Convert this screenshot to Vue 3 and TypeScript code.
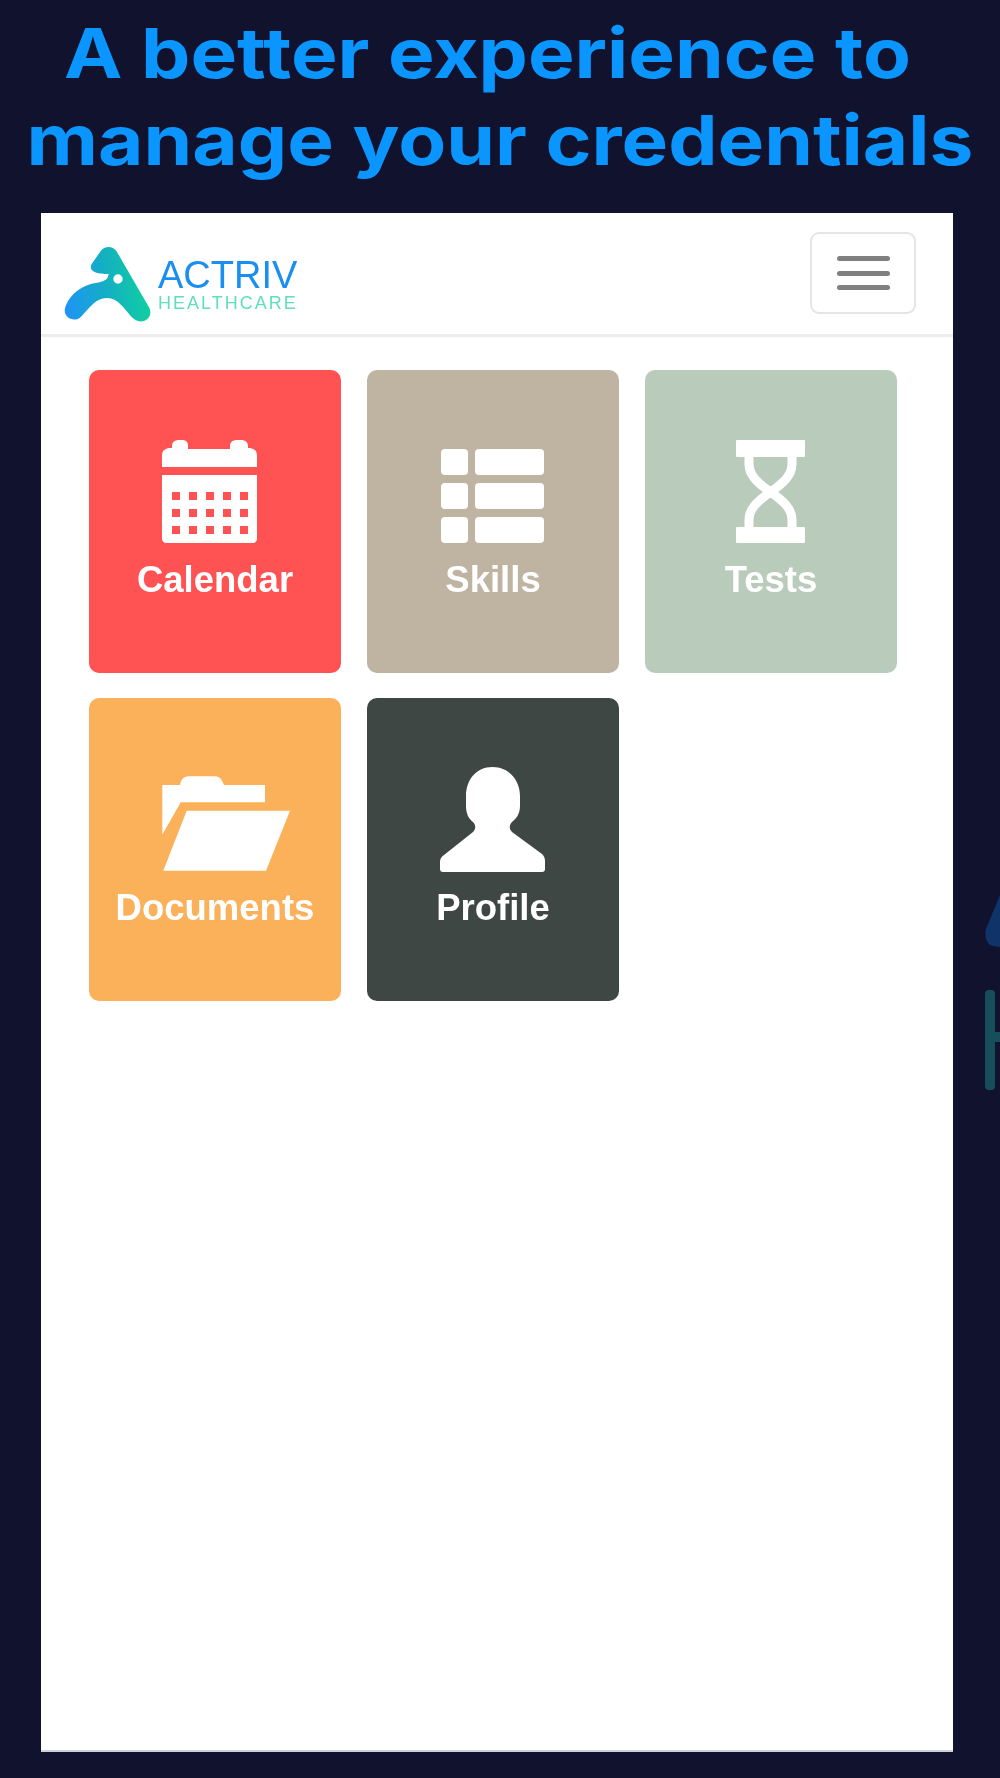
<script setup lang="ts">
interface Tile {
  label: string;
  icon: 'calendar' | 'skills' | 'tests' | 'documents' | 'profile';
  color: string;
}

const tiles: Tile[] = [
  { label: 'Calendar', icon: 'calendar', color: 'red' },
  { label: 'Skills', icon: 'skills', color: 'sand' },
  { label: 'Tests', icon: 'tests', color: 'sage' },
  { label: 'Documents', icon: 'documents', color: 'orange' },
  { label: 'Profile', icon: 'profile', color: 'slate' },
];

const calendarCols = [37, 54, 71, 88, 105];
const calendarRows = [54, 71, 88];
const skillRows = [11, 45, 79];
</script>

<template>
  <div class="page">
    <!-- faded logo peeking in from the right edge -->
    <svg class="ghost" viewBox="0 0 15 200" aria-hidden="true">
      <path d="M15 0 L1 34 C-1 42 2 50 8 51 L15 52 Z" fill="#10336a" />
      <rect x="0" y="95" width="10" height="100" rx="4" fill="#164e5c" />
      <rect x="8" y="137" width="7" height="10" fill="#164e5c" />
    </svg>

    <h1 class="headline">
      <span class="line-one">A better experience to</span>
      <span>manage your credentials</span>
    </h1>

    <section class="screen">
      <header class="nav">
        <div class="brand">
          <svg class="brand-mark" viewBox="70 105 270 240" aria-hidden="true">
            <defs>
              <linearGradient id="markGradient" gradientUnits="userSpaceOnUse" x1="80" y1="320" x2="330" y2="290">
                <stop offset="0" stop-color="#1e94f5" />
                <stop offset="0.5" stop-color="#14aec4" />
                <stop offset="1" stop-color="#10cfa0" />
              </linearGradient>
            </defs>
            <path
              fill="url(#markGradient)"
              fill-rule="evenodd"
              d="M156 162 L184 122 C196 106 222 108 232 126 L328 292 C344 322 310 346 284 328 C266 314 254 288 226 270 C205 258 175 262 150 292 L124 320 C106 340 64 324 78 288 C92 250 128 224 172 218 C196 214 205 208 207 192 C185 192 142 188 156 162 Z M235 193 A14 14 0 1 0 235 221 A14 14 0 1 0 235 193 Z"
            />
          </svg>
          <div class="brand-text">
            <span class="brand-name">ACTRIV</span>
            <span class="brand-sub">HEALTHCARE</span>
          </div>
        </div>
        <button class="toggler" type="button" aria-label="Menu">
          <span></span>
          <span></span>
          <span></span>
        </button>
      </header>

      <main class="grid">
        <a v-for="tile in tiles" :key="tile.label" class="tile" :class="tile.color">
          <svg class="tile-icon" viewBox="0 0 160 110" aria-hidden="true">
            <g v-if="tile.icon === 'calendar'">
              <path d="M27 29 V18 C27 13 29 11 34 10 H37 V8 C37 4 40 2 44 2 H47 C51 2 53 4 53 8 V11 H95 V8 C95 4 98 2 102 2 H106 C110 2 113 4 113 8 V10 H115 C120 11 122 13 122 18 V29 Z" fill="#fff" />
              <path d="M27 37 H122 V101 C122 103 120 105 118 105 H31 C29 105 27 103 27 101 Z" fill="#fff" />
              <template v-for="y in calendarRows" :key="y">
                <rect v-for="x in calendarCols" :key="x" class="cell" :x="x" :y="y" width="8" height="8" />
              </template>
            </g>
            <g v-else-if="tile.icon === 'skills'" fill="#fff">
              <template v-for="y in skillRows" :key="y">
                <rect x="28" :y="y" width="27" height="26" rx="4" />
                <rect x="62" :y="y" width="69" height="26" rx="4" />
              </template>
            </g>
            <g v-else-if="tile.icon === 'tests'">
              <rect x="45" y="2" width="69" height="17" rx="1" fill="#fff" />
              <rect x="45" y="89" width="69" height="16" rx="1" fill="#fff" />
              <path
                d="M58 17 V26 C58 38 68 46 79.5 54 C91 62 101 70 101 82 V91 M101 17 V26 C101 38 91 46 79.5 54 C68 62 58 70 58 82 V91"
                fill="none"
                stroke="#fff"
                stroke-width="9"
              />
            </g>
            <g v-else-if="tile.icon === 'documents'" fill="#fff">
              <path d="M27.3 19 H45 C46 14 48 10.3 54 10.3 H80 C85 10.3 87 14 89 19 H130 V36.3 H45.7 L27.3 68.7 Z" />
              <path d="M51.7 44.7 H155 L131 104.7 H28.3 Z" />
            </g>
            <path
              v-else
              fill="#fff"
              d="M79.5 1 C96 1 107 14 107 30 V40 C107 48 103 53 99 56 C96 59 96 63 99 66 L129 88 C131 90 132 92 132 95 V103 C132 105 131 106 129 106 H30 C28 106 27 105 27 103 V96 C27 93 28 91 31 89 L60 66 C63 63 63 59 60 56 C56 53 53 48 53 40 V30 C53 14 63 1 79.5 1 Z"
            />
          </svg>
          <span class="tile-label">{{ tile.label }}</span>
        </a>
      </main>
    </section>
  </div>
</template>

<style scoped>
.page {
  position: relative;
  width: 1000px;
  height: 1778px;
  overflow: hidden;
  background: #10122e;
  font-family: "Liberation Sans", Arial, sans-serif;
}

.ghost {
  position: absolute;
  left: 985px;
  top: 895px;
  width: 15px;
  height: 200px;
}

.headline {
  display: flex;
  flex-direction: column;
  align-items: center;
  margin: 0;
  padding-top: 10px;
  height: 196px;
  box-sizing: border-box;
  font-family: Inter, "Liberation Sans", sans-serif;
  font-size: 69px;
  font-weight: 700;
  line-height: 87px;
  white-space: nowrap;
  color: #0a95ff;
  /* Inter is narrower than the display face in the reference */
  transform: scaleX(1.135);
}

.line-one {
  padding-right: 22px;
}

.screen {
  width: 912px;
  height: 1539px;
  margin: 17px 0 0 41px;
  background: #fff;
  border-bottom: 2px solid #ccd3d8;
  box-sizing: border-box;
}

.nav {
  display: flex;
  align-items: flex-start;
  justify-content: space-between;
  height: 124px;
  padding: 19px 37px 0 22px;
  box-sizing: border-box;
  border-bottom: 3px solid #eceded;
  filter: blur(0.5px);
}

.brand {
  display: flex;
  align-items: flex-start;
  gap: 5px;
  padding-top: 13px;
}

.brand-mark {
  display: block;
  width: 90px;
  height: 80px;
}

.brand-text {
  display: flex;
  flex-direction: column;
  padding-top: 11px;
}

.brand-name {
  font-size: 38px;
  font-weight: 400;
  line-height: 38px;
  color: #1a8fef;
}

.brand-sub {
  font-size: 18px;
  line-height: 19px;
  letter-spacing: 2px;
  color: #5fdfbe;
}

.toggler {
  display: flex;
  flex-direction: column;
  align-items: center;
  justify-content: center;
  gap: 9.5px;
  width: 106px;
  height: 82px;
  padding: 0;
  background: #fff;
  border: 2px solid #e4e5e5;
  border-radius: 9px;
}

.toggler span {
  display: block;
  width: 53px;
  height: 5px;
  border-radius: 3px;
  background: #808080;
}

.grid {
  display: grid;
  grid-template-columns: repeat(3, 252px);
  grid-auto-rows: 303px;
  column-gap: 26px;
  row-gap: 25px;
  padding: 33px 0 0 48px;
  filter: blur(0.5px);
}

.tile {
  display: flex;
  flex-direction: column;
  align-items: center;
  padding-top: 68px;
  box-sizing: border-box;
  border-radius: 10px;
  color: #fff;
}

.tile-icon {
  display: block;
  width: 160px;
  height: 110px;
}

.tile-label {
  margin-top: 10px;
  font-size: 36.5px;
  font-weight: 700;
  line-height: 44px;
}

.cell {
  fill: #ff5252;
}

.red {
  background: #ff5252;
}

.sand {
  background: #bfb3a2;
}

.sage {
  background: #b9ccbb;
}

.orange {
  background: #fbb05a;
}

.slate {
  background: #3f4745;
}
</style>
